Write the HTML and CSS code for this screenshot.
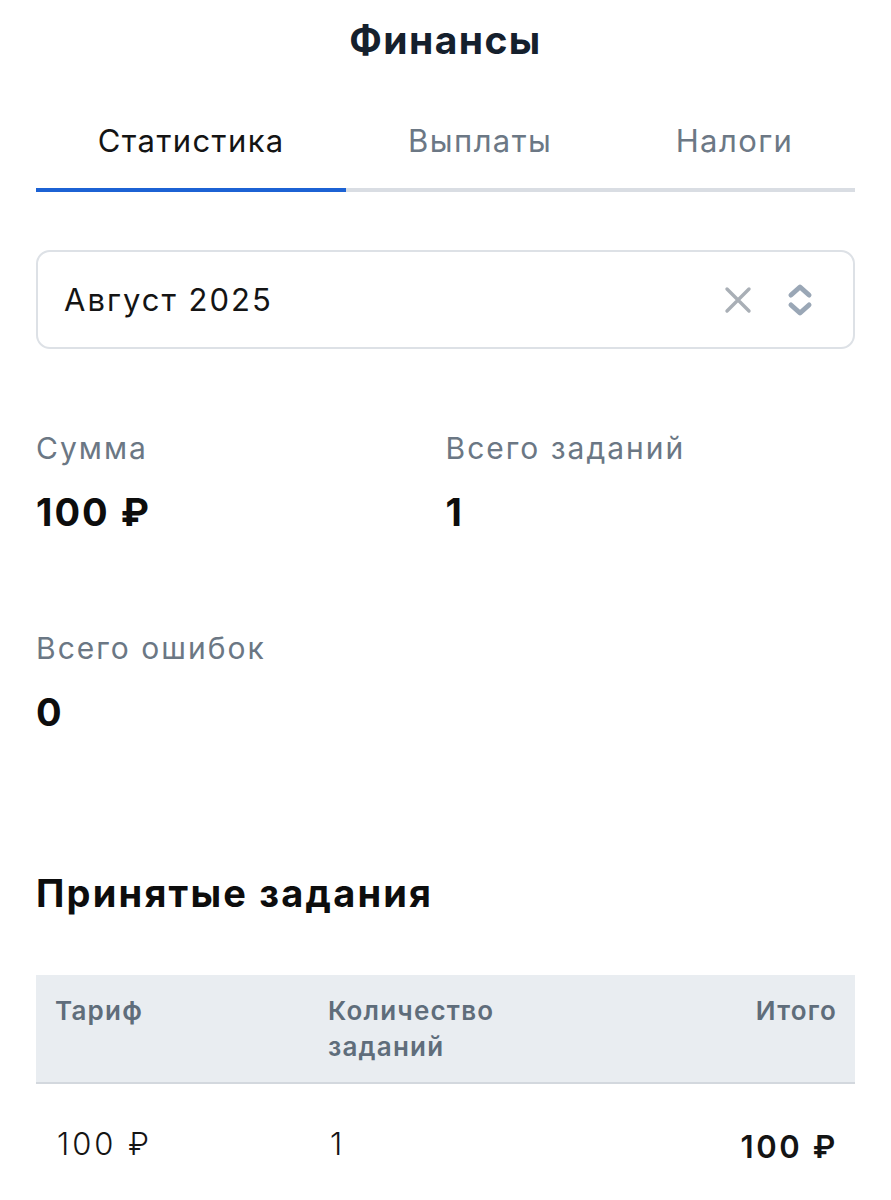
FILE: index.html
```html
<!DOCTYPE html>
<html lang="ru">
<head>
<meta charset="utf-8">
<link rel="stylesheet" href="styles.css">
</head>
<body>
<div class="page">
  <h1 class="title">Финансы</h1>
  <nav class="tabs">
    <div class="tab active">Статистика</div>
    <div class="tab">Выплаты</div>
    <div class="tab">Налоги</div>
  </nav>

  <div class="select">
    <span class="select-value">Август 2025</span>
    <div class="select-icons">
      <svg class="icon-x" width="30" height="30" viewBox="0 0 30 30"><path d="M4 4L26 26M26 4L4 26" stroke="#a9afb6" stroke-width="3.4" stroke-linecap="round" fill="none"/></svg>
      <svg class="icon-sort" width="26" height="34" viewBox="0 0 26 34"><path d="M4 12L13 4L22 12M4 22L13 30L22 22" stroke="#9aa7b6" stroke-width="5" stroke-linecap="round" stroke-linejoin="round" fill="none"/></svg>
    </div>
  </div>

  <div class="stats">
    <div class="stat">
      <div class="stat-label">Сумма</div>
      <div class="stat-value">100 ₽</div>
    </div>
    <div class="stat">
      <div class="stat-label">Всего заданий</div>
      <div class="stat-value">1</div>
    </div>
    <div class="stat">
      <div class="stat-label">Всего ошибок</div>
      <div class="stat-value">0</div>
    </div>
  </div>

  <h2 class="section-title">Принятые задания</h2>

  <table class="table">
    <thead>
      <tr>
        <th>Тариф</th>
        <th>Количество<br>заданий</th>
        <th class="right">Итого</th>
      </tr>
    </thead>
    <tbody>
      <tr>
        <td>100 ₽</td>
        <td>1</td>
        <td class="right total">100 ₽</td>
      </tr>
    </tbody>
  </table>
</div>
</body>
</html>
```

FILE: styles.css
```css
* { box-sizing: border-box; }
html, body { margin: 0; padding: 0; background: #fff; }
body {
  font-family: Inter, "Noto Sans", Roboto, sans-serif;
  color: #111;
}
.page {
  padding: 0 36px;
}
.title {
  margin: 0;
  padding-top: 18px;
  font-size: 39px;
  line-height: 44px;
  font-weight: 700;
  text-align: center;
  color: #15202d;
  letter-spacing: 1.4px;
}
.tabs {
  display: flex;
  margin-top: 61px;
}
.tab {
  flex: 1 1 auto;
  text-align: center;
  font-size: 31px;
  line-height: 36px;
  letter-spacing: 1.4px;
  color: #6c7885;
  padding-bottom: 29px;
  border-bottom: 4px solid #d9dde3;
}
.tab.active {
  color: #141414;
  border-bottom-color: #1c62d4;
}
.select {
  margin-top: 58px;
  height: 99px;
  border: 2px solid #dde1e6;
  border-radius: 14px;
  display: flex;
  align-items: center;
  justify-content: space-between;
  padding: 0 40px 0 26px;
}
.select-value {
  font-size: 31px;
  letter-spacing: 2px;
  color: #141414;
}
.select-icons {
  display: flex;
  align-items: center;
  gap: 34px;
}
.icon-x, .icon-sort { display: block; }
.stats {
  margin-top: 81px;
  display: grid;
  grid-template-columns: 1fr 1fr;
  row-gap: 96px;
}
.stat-label {
  font-size: 30px;
  line-height: 36px;
  letter-spacing: 2px;
  color: #6b7784;
}
.stat-value {
  margin-top: 24px;
  font-size: 38px;
  line-height: 44px;
  font-weight: 700;
  letter-spacing: 2px;
  color: #0d0d0d;
}
.section-title {
  margin: 136px 0 0;
  font-size: 38px;
  line-height: 46px;
  font-weight: 700;
  letter-spacing: 2.2px;
  color: #0d0d0d;
}
.table {
  margin-top: 59px;
  width: 100%;
  border-collapse: collapse;
  table-layout: fixed;
}
.table th {
  background: #e9edf1;
  border-bottom: 2px solid #d3d8de;
  text-align: left;
  vertical-align: top;
  font-size: 26px;
  line-height: 36px;
  font-weight: 600;
  letter-spacing: 1.2px;
  color: #5f6d7b;
  padding: 18px 19px 17px;
}
.table td {
  font-size: 31px;
  line-height: 36px;
  font-weight: 300;
  letter-spacing: 3px;
  color: #141414;
  padding: 42px 19px 20px 21px;
  vertical-align: top;
}
.table th.right { text-align: right; padding-right: 18px; }
.table td.right { text-align: right; padding-right: 17px; }
.table td.total {
  font-weight: 600;
  font-size: 31px;
  letter-spacing: 2.6px;
  padding-top: 45px;
}
```
